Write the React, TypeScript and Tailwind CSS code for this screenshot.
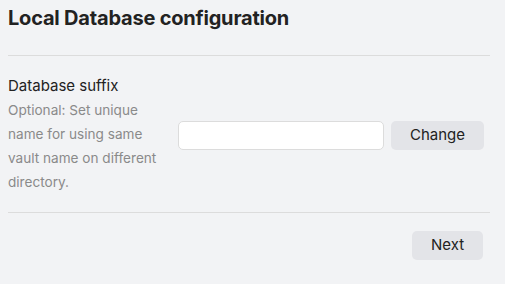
export default function App() {
  return (
    <div
      className="h-[284px] w-[505px] bg-[#f2f3f5] pl-2 pr-[15px] text-[#222222]"
      style={{ fontFamily: 'Inter, "Noto Sans", sans-serif' }}
    >
      <h2 className="pt-[6px] pb-[25px] text-[20px] font-bold leading-[24px] tracking-[-0.2px]">
        Local Database configuration
      </h2>
      <div className="border-t border-[#dcdcdc]" />

      <div className="flex items-center pt-[20px] pb-[18px]">
        <div className="mr-[15px] w-[155px] shrink-0">
          <div className="text-[15px] leading-[20px]">Database suffix</div>
          <div className="mt-[2px] text-[13.6px] leading-[24px] text-[#8a8a8a]">
            Optional: Set unique name for using same vault name on different directory.
          </div>
        </div>
        <div className="flex items-center gap-[7px]">
          <input
            type="text"
            className="h-[29px] w-[206px] rounded-[5px] border border-[#dcdcdc] bg-white px-2 text-[14px] outline-none"
          />
          <button className="h-[29px] w-[93px] rounded-[5px] bg-[#e3e4e8] text-[15px] text-[#222222]">
            Change
          </button>
        </div>
      </div>

      <div className="border-t border-[#dcdcdc]" />
      <div className="flex justify-end pt-[18px]">
        <button className="mr-[7px] h-[29px] w-[71px] rounded-[5px] bg-[#e3e4e8] text-[15px] text-[#222222]">
          Next
        </button>
      </div>
    </div>
  )
}
